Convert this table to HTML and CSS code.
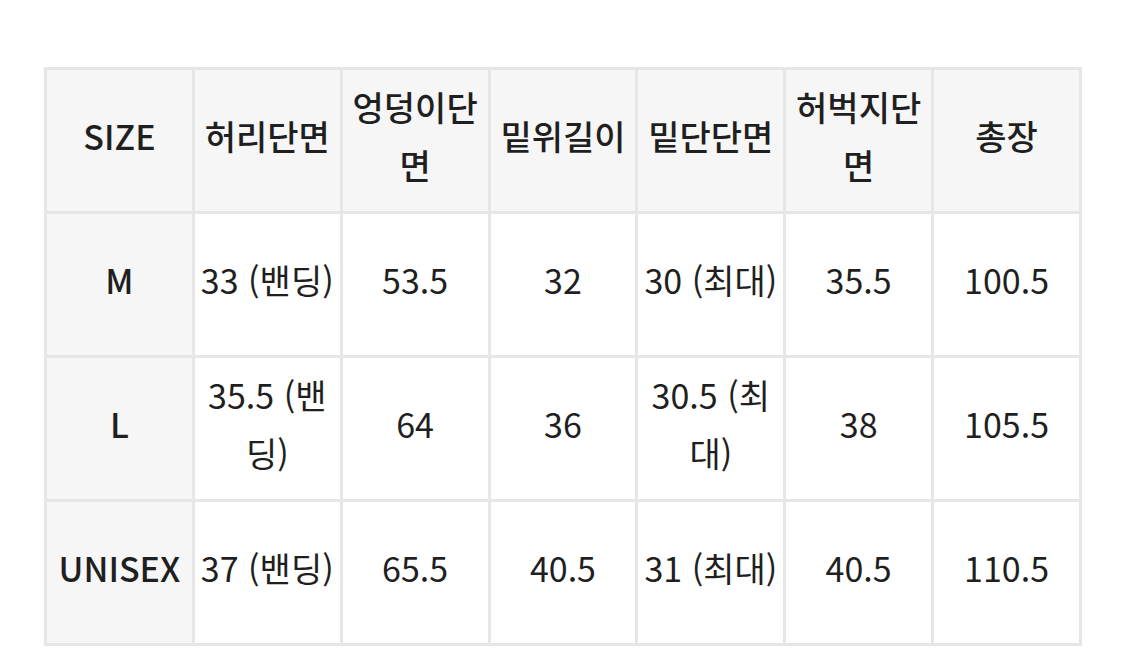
FILE: index.html
```html
<!DOCTYPE html>
<html lang="ko">
<head>
<meta charset="utf-8">
<link rel="stylesheet" href="styles.css">
</head>
<body>
<div class="page">
  <table class="size-table">
    <thead>
      <tr>
        <th>SIZE</th>
        <th>허리단면</th>
        <th>엉덩이단면</th>
        <th>밑위길이</th>
        <th>밑단단면</th>
        <th>허벅지단면</th>
        <th>총장</th>
      </tr>
    </thead>
    <tbody>
      <tr>
        <th>M</th>
        <td>33 (밴딩)</td>
        <td>53.5</td>
        <td>32</td>
        <td>30 (최대)</td>
        <td>35.5</td>
        <td>100.5</td>
      </tr>
      <tr>
        <th>L</th>
        <td>35.5 (밴딩)</td>
        <td>64</td>
        <td>36</td>
        <td>30.5 (최대)</td>
        <td>38</td>
        <td>105.5</td>
      </tr>
      <tr>
        <th>UNISEX</th>
        <td>37 (밴딩)</td>
        <td>65.5</td>
        <td>40.5</td>
        <td>31 (최대)</td>
        <td>40.5</td>
        <td>110.5</td>
      </tr>
    </tbody>
  </table>
</div>
</body>
</html>
```

FILE: styles.css
```css
html, body {
  margin: 0;
  padding: 0;
  background: #ffffff;
}

.page {
  padding: 67px 44px 0 44px;
  font-family: "Noto Sans CJK KR", "Noto Sans", sans-serif;
  color: #1f1f1f;
}

.size-table {
  width: 1038px;
  table-layout: fixed;
  border-collapse: collapse;
  border: 3px solid #e6e6e6;
}

.size-table th,
.size-table td {
  height: 132px;
  border: 3px solid #e6e6e6;
  padding: 0 2px 9px 2px;
  text-align: center;
  vertical-align: middle;
  font-size: 34px;
  line-height: 58px;
  word-break: break-all;
}

.size-table th {
  background: #f6f6f6;
  font-weight: 500;
}

.size-table td {
  background: #ffffff;
  font-weight: 400;
}
```
